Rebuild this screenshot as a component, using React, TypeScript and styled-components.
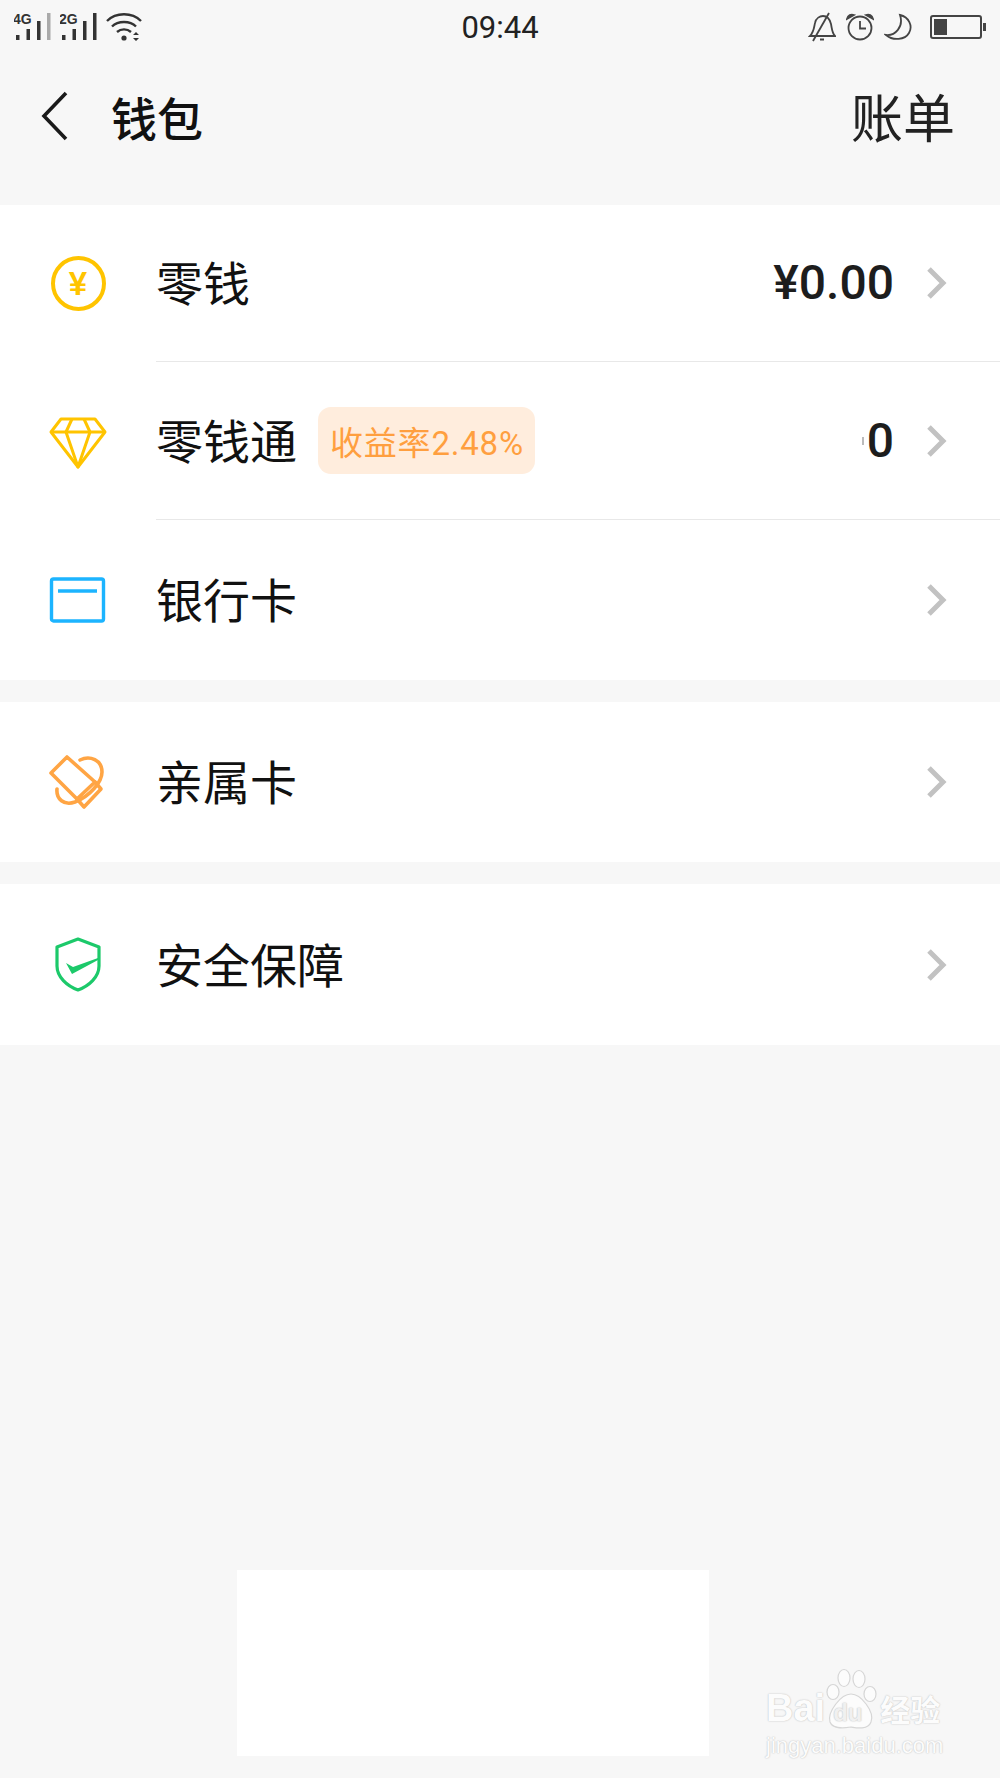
import React from 'react';
import styled, { createGlobalStyle } from 'styled-components';

const GlobalStyle = createGlobalStyle`
  html, body {
    margin: 0;
    padding: 0;
    background: #f7f7f7;
  }
  * {
    box-sizing: border-box;
  }
`;

const CN_FONT = `"Noto Sans CJK SC", "Liberation Sans", sans-serif`;

const Page = styled.div`
  position: relative;
  width: 1000px;
  height: 1778px;
  overflow: hidden;
  background: #f7f7f7;
  font-family: ${CN_FONT};
  color: #111;
`;

const StatusBar = styled.div`
  display: grid;
  grid-template-columns: 1fr auto 1fr;
  align-items: center;
  height: 50px;
  padding: 0 14px 0 14px;
`;

const StatusLeft = styled.div`
  display: flex;
  align-items: center;
  gap: 8px;
`;

const StatusRight = styled.div`
  display: flex;
  align-items: center;
  justify-content: flex-end;
  gap: 10px;
`;

const Time = styled.div`
  font-family: Roboto, sans-serif;
  font-size: 31px;
  line-height: 50px;
  padding-top: 3px;
  color: #222;
`;

const BatteryShell = styled.div`
  display: flex;
  align-items: center;
  margin-left: 8px;
`;

const BatteryBody = styled.div`
  width: 52px;
  height: 24px;
  padding: 2px;
  border: 2px solid #444;
  border-radius: 3px;
`;

const BatteryFill = styled.div`
  height: 100%;
  background: #444;
`;

const BatteryCap = styled.div`
  width: 3px;
  height: 8px;
  margin-left: 1px;
  background: #444;
`;

const NavBar = styled.div`
  display: flex;
  align-items: center;
  justify-content: space-between;
  height: 131px;
  padding: 0 45px 0 40px;
  margin-bottom: 24px;
`;

const NavLeft = styled.div`
  display: flex;
  align-items: center;
  gap: 43px;
`;

const NavTitle = styled.div`
  font-size: 46px;
  font-weight: 500;
  line-height: 60px;
  color: #111;
`;

const NavAction = styled.div`
  font-size: 52px;
  line-height: 60px;
  color: #222;
`;

const Card = styled.div<{ $gap?: number }>`
  background: #fff;
  margin-bottom: ${props => props.$gap ?? 0}px;
`;

const Row = styled.div<{ $height: number }>`
  display: flex;
  align-items: center;
  height: ${props => props.$height}px;
  padding: 0 52px 0 48px;
`;

const IconSlot = styled.div`
  display: flex;
  align-items: center;
  justify-content: center;
  flex: none;
  width: 60px;
  height: 60px;
  margin-right: 48px;
`;

const CoinIcon = styled.div`
  display: flex;
  align-items: center;
  justify-content: center;
  width: 55px;
  height: 55px;
  border: 4px solid #ffc400;
  border-radius: 50%;
  color: #ffc400;
  font-family: "Liberation Sans", sans-serif;
  font-size: 33px;
  font-weight: 700;
  line-height: 1;
`;

const RowLabel = styled.div`
  font-size: 47px;
  line-height: 60px;
  padding-bottom: 4px;
  height: 64px;
  color: #111;
`;

const Badge = styled.div`
  display: flex;
  align-items: center;
  height: 67px;
  margin-left: 21px;
  padding: 0 11px 0 12px;
  border-radius: 13px;
  background: #ffeddd;
  color: #ff9f3f;
  font-family: Roboto, "Noto Sans CJK SC", sans-serif;
  font-size: 33px;
  letter-spacing: 0.8px;
  white-space: nowrap;
`;

const Spacer = styled.div`
  flex: 1;
`;

const Amount = styled.div`
  display: flex;
  align-items: center;
  margin-right: 32px;
  font-family: Roboto, sans-serif;
  font-size: 48px;
  font-weight: 500;
  line-height: 60px;
  color: #1d1d1d;
`;

const Sliver = styled.span`
  width: 2px;
  height: 8px;
  margin-right: 3px;
  background: #bbb;
`;

const Divider = styled.div`
  height: 1px;
  margin-left: 156px;
  background: #e8e8e8;
`;

const BlankPanel = styled.div`
  width: 472px;
  height: 186px;
  margin: 525px 0 0 237px;
  background: #fff;
`;

const Watermark = styled.div`
  position: absolute;
  left: 766px;
  top: 1668px;
  width: 182px;
  color: #fcfcfc;
  font-family: "Liberation Sans", sans-serif;
  text-shadow: 0 0 1px #c4c4c4, 0 0 2px #d0d0d0;
`;

const WatermarkTop = styled.div`
  display: flex;
  align-items: flex-end;
  height: 62px;
`;

const WatermarkBrand = styled.span`
  font-size: 38px;
  font-weight: 700;
  line-height: 44px;
`;

const WatermarkCn = styled.span`
  font-family: ${CN_FONT};
  font-size: 30px;
  font-weight: 700;
  line-height: 44px;
  margin-left: 1px;
`;

const PawBox = styled.div`
  position: relative;
  flex: none;
  width: 54px;
  height: 62px;
`;

const PawText = styled.span`
  position: absolute;
  left: 8px;
  bottom: 3px;
  color: #f0f0f0;
  font-size: 24px;
  font-weight: 700;
  line-height: 28px;
`;

const WatermarkUrl = styled.div`
  font-size: 22px;
  line-height: 28px;
  margin-top: 2px;
  white-space: nowrap;
`;

const Signal = ({ label, lastColor }: { label: string; lastColor: string }) => (
  <svg width="38" height="30" viewBox="0 0 38 30">
    <text x="-1" y="12" fontFamily="Liberation Sans, sans-serif" fontSize="14" fontWeight="700" fill="#333">
      {label}
    </text>
    <rect x="2" y="23" width="3.5" height="5" fill="#333" />
    <rect x="12.5" y="17" width="3.5" height="11" fill="#333" />
    <rect x="23" y="9" width="3.5" height="19" fill="#333" />
    <rect x="33" y="1" width="3.5" height="27" fill={lastColor} />
  </svg>
);

const WifiIcon = () => (
  <svg width="36" height="30" viewBox="0 0 36 30" fill="none" stroke="#333" strokeWidth="2.4">
    <path d="M1 9 C10 0 26 0 35 9" />
    <path d="M6 14.5 C12 8.5 24 8.5 30 14.5" />
    <path d="M11 20 C15 16.5 21 16.5 25 20" />
    <circle cx="18" cy="26" r="2.6" fill="#333" stroke="none" />
    <path d="M27 23 L33 23 L30 20 Z M27 26 L33 26 L30 29 Z" fill="#333" stroke="none" />
  </svg>
);

const BellOffIcon = () => (
  <svg width="28" height="30" viewBox="0 0 28 30" fill="none" stroke="#444" strokeWidth="1.8">
    <path d="M2 24 C6 20 6 15 7 11 C8 6 12 4 15 4 C20 4 22 8 23 12 C24 17 24 21 27 24 Z" />
    <path d="M5 29 L21 1" />
    <path d="M12 27.5 L16 27.5" strokeWidth="2" />
  </svg>
);

const AlarmIcon = () => (
  <svg width="28" height="30" viewBox="0 0 28 30" fill="none" stroke="#444" strokeWidth="1.8">
    <circle cx="14" cy="16" r="11.5" />
    <path d="M14 9 L14 16.5 L20 16.5" />
    <path d="M1 7 C2 3 5 2 8 3 Z M27 7 C26 3 23 2 20 3 Z" fill="#444" />
  </svg>
);

const MoonIcon = () => (
  <svg width="28" height="30" viewBox="0 0 28 30" fill="none" stroke="#444" strokeWidth="1.8">
    <path d="M16 3 C25 5 29 14 25 21 C21 28 9 29 2 23 C11 24 20 15 16 3 Z" />
  </svg>
);

const BackIcon = () => (
  <svg width="28" height="50" viewBox="0 0 28 50" fill="none" stroke="#1a1a1a" strokeWidth="3.6">
    <path d="M26 2 L4 25 L26 48" />
  </svg>
);

const Chevron = () => (
  <svg width="22" height="32" viewBox="0 0 22 32" fill="none" stroke="#c2c2c2" strokeWidth="5">
    <path d="M3 2 L17 16 L3 30" />
  </svg>
);

const DiamondIcon = () => (
  <svg width="60" height="60" viewBox="0 0 60 60" fill="none" stroke="#ffc400" strokeWidth="3" strokeLinejoin="round">
    <path d="M13 8 L47 8 L57 21 L30 56 L3 21 Z" />
    <path d="M3 21 L57 21" />
    <path d="M24 8 L18 21 L30 56 L42 21 L36 8" />
  </svg>
);

const BankCardIcon = () => (
  <svg width="60" height="60" viewBox="0 0 60 60" fill="none" stroke="#1cb4ff" strokeWidth="3.4">
    <rect x="3.5" y="9" width="52" height="42" rx="2" />
    <path d="M10 21 L49 21" />
  </svg>
);

const FamilyCardIcon = () => (
  <svg width="60" height="60" viewBox="0 0 60 60" fill="none" stroke="#ffa544" strokeWidth="3.6" strokeLinejoin="round" strokeLinecap="round">
    <path d="M19 5 L3 21 L29 47 L47 30 Z" />
    <path d="M47 30 L53 37 L36 55 L29 47" />
    <path d="M32 8 C42 3 54 8 54 20 C54 30 42 44 27 50 C16 54 8 47 9 37" />
  </svg>
);

const ShieldIcon = () => (
  <svg width="60" height="60" viewBox="0 0 60 60" fill="none" stroke="#1cc96a" strokeWidth="3.2" strokeLinejoin="round">
    <path d="M30 4 L9 12 L9 31 C9 42 19 51 30 55 C41 51 51 42 51 31 L51 12 Z" />
    <path d="M18 28 L25 32 L50 23 L50 25 L24 39 Z" fill="#1cc96a" stroke="none" />
  </svg>
);

const PawIcon = () => (
  <svg width="54" height="62" viewBox="0 0 54 62" fill="#fcfcfc" stroke="#d6d6d6" strokeWidth="1.2">
    <ellipse cx="8" cy="24" rx="6" ry="7.5" />
    <ellipse cx="19" cy="10" rx="6" ry="8.5" />
    <ellipse cx="34" cy="11" rx="6" ry="8.5" />
    <ellipse cx="45" cy="26" rx="6" ry="7.5" />
    <path d="M26 26 C36 26 50 44 46 54 C43 62 32 60 26 59 C20 60 8 62 5 54 C2 44 16 26 26 26 Z" />
  </svg>
);

export default function App() {
  return (
    <Page>
      <GlobalStyle />
      <StatusBar>
        <StatusLeft>
          <Signal label="4G" lastColor="#aaa" />
          <Signal label="2G" lastColor="#333" />
          <WifiIcon />
        </StatusLeft>
        <Time>09:44</Time>
        <StatusRight>
          <BellOffIcon />
          <AlarmIcon />
          <MoonIcon />
          <BatteryShell>
            <BatteryBody>
              <BatteryFill style={{ width: '30%' }} />
            </BatteryBody>
            <BatteryCap />
          </BatteryShell>
        </StatusRight>
      </StatusBar>

      <NavBar>
        <NavLeft>
          <BackIcon />
          <NavTitle>钱包</NavTitle>
        </NavLeft>
        <NavAction>账单</NavAction>
      </NavBar>

      <Card $gap={22}>
        <Row $height={156}>
          <IconSlot>
            <CoinIcon>¥</CoinIcon>
          </IconSlot>
          <RowLabel>零钱</RowLabel>
          <Spacer />
          <Amount>¥0.00</Amount>
          <Chevron />
        </Row>
        <Divider />
        <Row $height={157}>
          <IconSlot>
            <DiamondIcon />
          </IconSlot>
          <RowLabel>零钱通</RowLabel>
          <Badge>收益率2.48%</Badge>
          <Spacer />
          <Amount>
            <Sliver />0
          </Amount>
          <Chevron />
        </Row>
        <Divider />
        <Row $height={160}>
          <IconSlot>
            <BankCardIcon />
          </IconSlot>
          <RowLabel>银行卡</RowLabel>
          <Spacer />
          <Chevron />
        </Row>
      </Card>

      <Card $gap={22}>
        <Row $height={160}>
          <IconSlot>
            <FamilyCardIcon />
          </IconSlot>
          <RowLabel>亲属卡</RowLabel>
          <Spacer />
          <Chevron />
        </Row>
      </Card>

      <Card>
        <Row $height={161}>
          <IconSlot>
            <ShieldIcon />
          </IconSlot>
          <RowLabel>安全保障</RowLabel>
          <Spacer />
          <Chevron />
        </Row>
      </Card>

      <BlankPanel />

      <Watermark>
        <WatermarkTop>
          <WatermarkBrand>Bai</WatermarkBrand>
          <PawBox>
            <PawIcon />
            <PawText>du</PawText>
          </PawBox>
          <WatermarkCn>经验</WatermarkCn>
        </WatermarkTop>
        <WatermarkUrl>jingyan.baidu.com</WatermarkUrl>
      </Watermark>
    </Page>
  );
}
